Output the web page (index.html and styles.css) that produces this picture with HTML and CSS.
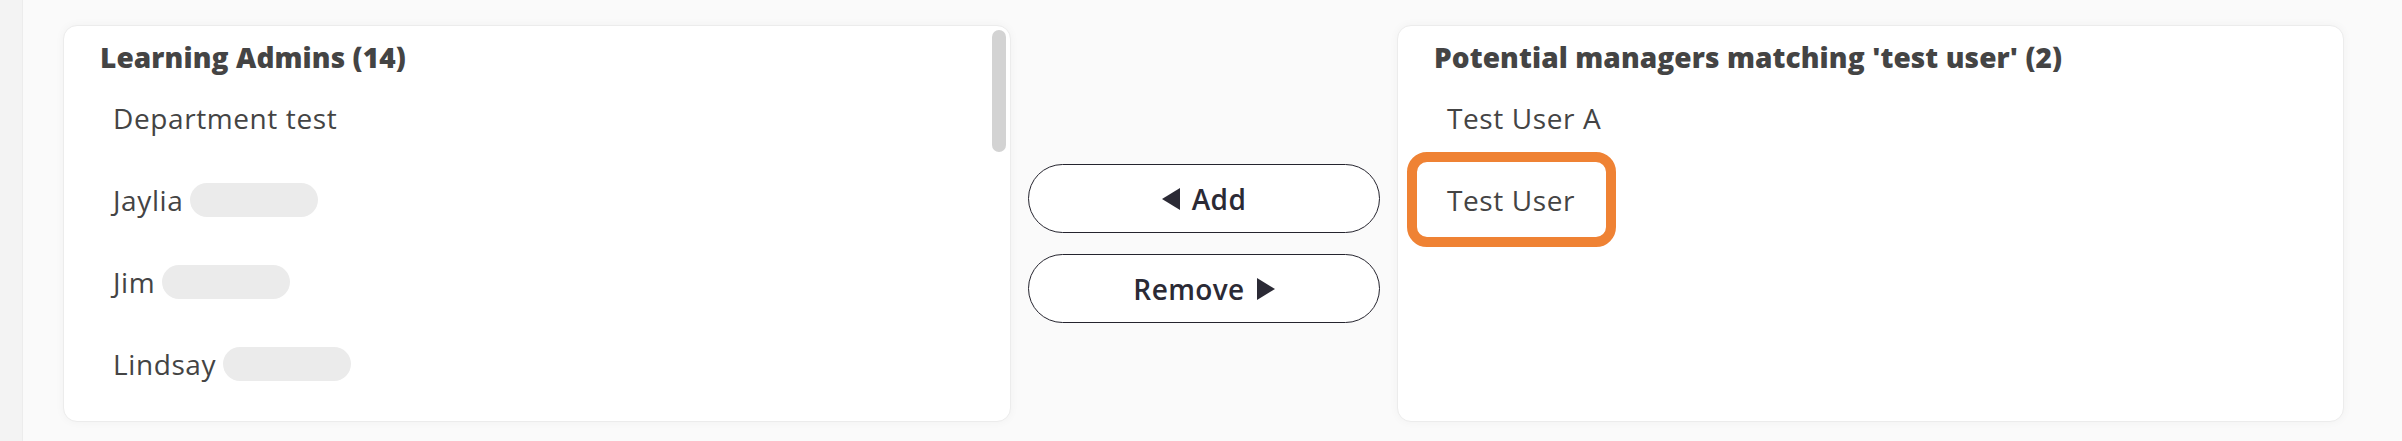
FILE: index.html
```html
<!DOCTYPE html>
<html lang="en">
<head>
<meta charset="utf-8">
<title>Managers</title>
<link rel="stylesheet" href="styles.css">
</head>
<body>
<div class="page">
  <aside class="rail"></aside>
  <main class="content">
    <section class="panel">
      <div class="thumb"></div>
      <h2 class="panel-title">Learning Admins (14)</h2>
      <ul class="list">
        <li class="item">Department test</li>
        <li class="item">Jaylia<span class="redact"></span></li>
        <li class="item">Jim<span class="redact"></span></li>
        <li class="item">Lindsay<span class="redact"></span></li>
      </ul>
    </section>
    <div class="actions">
      <button class="btn" type="button">
        <svg class="tri" width="18" height="22" viewBox="0 0 18 22"><path d="M18 0 L0 11 L18 22 Z"/></svg>
        <span>Add</span>
      </button>
      <button class="btn" type="button">
        <span>Remove</span>
        <svg class="tri" width="18" height="22" viewBox="0 0 18 22"><path d="M0 0 L18 11 L0 22 Z"/></svg>
      </button>
    </div>
    <section class="panel panel-right">
      <h2 class="panel-title">Potential managers matching 'test user' (2)</h2>
      <ul class="list">
        <li class="item">Test User A</li>
        <li class="item item-focus">Test User</li>
      </ul>
    </section>
  </main>
</div>
</body>
</html>
```
FILE: styles.css
```css
* { box-sizing: border-box; }
html, body {
  margin: 0;
  padding: 0;
  background: #fafafa;
  font-family: "Open Sans", "Liberation Sans", sans-serif;
}
.page {
  display: flex;
  height: 441px;
}
.rail {
  width: 23px;
  flex: none;
  background: #f3f3f3;
  border-right: 1px solid #ececec;
}
.content {
  display: flex;
  align-items: flex-start;
  padding: 25px 0 0 40px;
}
.panel {
  position: relative;
  width: 948px;
  height: 397px;
  background: #fff;
  border: 1px solid #ececec;
  border-radius: 14px;
  box-shadow: 0 0 10px rgba(0, 0, 0, 0.04);
  padding: 13px 0 0 0;
  overflow: hidden;
}
.panel-right { width: 947px; }
.thumb {
  position: absolute;
  top: 4px;
  right: 4px;
  width: 14px;
  height: 122px;
  border-radius: 7px;
  background: #d3d3d3;
}
.panel-title {
  margin: 0;
  padding-left: 36px;
  font-size: 28px;
  line-height: 36px;
  font-weight: 800;
  color: #444;
  letter-spacing: 0.1px;
}
.list {
  list-style: none;
  margin: 5px 0 0 0;
  padding: 0 0 0 19px;
  display: flex;
  flex-direction: column;
  align-items: flex-start;
  gap: 7px;
}
.item {
  height: 75px;
  display: flex;
  align-items: center;
  padding: 0 31px 0 30px;
  font-size: 28px;
  color: #444;
  letter-spacing: 0.6px;
  border-radius: 10px;
}
.item-focus {
  outline: 10px solid #ef8234;
  outline-offset: 0;
}
.redact {
  display: inline-block;
  width: 128px;
  height: 34px;
  margin-left: 7px;
  border-radius: 17px;
  background: #ebebeb;
}
.actions {
  width: 386px;
  flex: none;
  display: flex;
  flex-direction: column;
  align-items: center;
  gap: 21px;
  padding-top: 139px;
}
.btn {
  width: 352px;
  height: 69px;
  display: flex;
  align-items: center;
  justify-content: center;
  gap: 12px;
  background: #fff;
  border: 1.5px solid #25242e;
  border-radius: 35px;
  font-family: "Open Sans", "Liberation Sans", sans-serif;
  font-size: 28px;
  font-weight: 600;
  color: #2b2a35;
  letter-spacing: 0.4px;
  padding: 0;
}
.tri { fill: #2b2a35; flex: none; }
```
